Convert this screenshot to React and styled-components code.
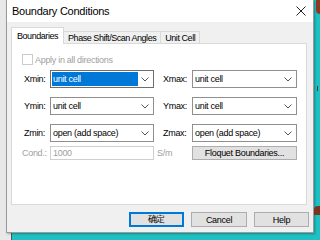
import React from 'react'
import styled, { createGlobalStyle } from 'styled-components'

const Global = createGlobalStyle`
  body {
    margin: 0;
    width: 320px;
    height: 240px;
    overflow: hidden;
    font-family: "Liberation Sans", Arial, sans-serif;
  }
`

const Scene = styled.div`
  width: 320px;
  height: 240px;
  display: flex;
  background: linear-gradient(to right, #e8e8e8 0 11px, #4a5a5a 11px 12px, #1dc1c3 12px);
`

const Dialog = styled.div`
  margin-left: 6px;
  width: 308px;
  height: 233px;
  box-sizing: border-box;
  border: 1px solid #9a9a9a;
  border-top: none;
  background: #f0f0f0;
  display: flex;
  flex-direction: column;
  box-shadow: 1px 1px 2px rgba(0, 0, 0, 0.3);
`

const TitleBar = styled.div`
  height: 22px;
  flex: none;
  background: #fff;
  display: flex;
  align-items: center;
  padding-left: 5px;
  font-size: 11px;
  letter-spacing: -0.25px;
  color: #000;
`

const Close = styled.div`
  margin-left: auto;
  margin-right: 7px;
  width: 10px;
  height: 10px;
  display: flex;
`

const Body = styled.div`
  flex: 1;
  display: flex;
  flex-direction: column;
  padding: 6px 6px 0 4px;
`

const Tabs = styled.div`
  display: flex;
  align-items: flex-end;
  height: 16px;
  position: relative;
  z-index: 1;
  margin-bottom: -1px;
`

const Tab = styled.div`
  box-sizing: border-box;
  height: ${p => (p.$active ? 17 : 13)}px;
  padding: 0 ${p => (p.$active ? 5 : 4)}px;
  display: flex;
  align-items: center;
  font-size: 9px;
  letter-spacing: -0.45px;
  color: #000;
  background: ${p => (p.$active ? '#fff' : '#f0f0f0')};
  border: 1px solid #d9d9d9;
  border-bottom: ${p => (p.$active ? 'none' : '1px solid #d9d9d9')};
  margin-left: ${p => (p.$active ? 0 : -1)}px;
  padding-bottom: ${p => (p.$active ? 1 : 0)}px;
`

const Panel = styled.div`
  height: 162px;
  box-sizing: border-box;
  background: #fff;
  border: 1px solid #d9d9d9;
  padding: 10px 0 0 12px;
  display: flex;
  flex-direction: column;
  font-size: 9px;
  letter-spacing: -0.3px;
`

const CheckRow = styled.div`
  display: flex;
  align-items: center;
  gap: 2px;
  margin-left: -2px;
  height: 11px;
  color: #a0a0a0;
`

const Box = styled.div`
  width: 9px;
  height: 9px;
  border: 1px solid #cccccc;
  background: #fff;
`

const Row = styled.div`
  display: grid;
  grid-template-columns: 26px 104px 38px 105px;
  height: ${p => p.$h}px;
  margin-top: ${p => p.$top}px;
  align-items: center;
`

const Label = styled.div`
  color: ${p => (p.$disabled ? '#a0a0a0' : '#000')};
  padding-left: ${p => p.$pad || 0}px;
  margin-left: ${p => p.$shift || 0}px;
`

const Select = styled.div`
  box-sizing: border-box;
  height: 18px;
  border: 1px solid ${p => (p.$focus ? '#6e6e6e' : '#8f8f8f')};
  background: #fff;
  display: flex;
  align-items: center;
  padding: 1px;
`

const Value = styled.div`
  flex: 1;
  height: 14px;
  display: flex;
  align-items: center;
  padding-left: 1px;
  color: ${p => (p.$focus ? '#fff' : '#000')};
  background: ${p => (p.$focus ? '#0078d7' : 'transparent')};
`

const Arrow = styled.div`
  width: 14px;
  display: flex;
  justify-content: center;
`

const Input = styled.div`
  box-sizing: border-box;
  height: 14px;
  border: 1px solid #cfcfcf;
  background: #fff;
  color: #a0a0a0;
  display: flex;
  align-items: center;
  padding-left: 2px;
`

const Button = styled.div`
  box-sizing: border-box;
  height: ${p => p.$h || 15}px;
  width: ${p => (p.$w ? p.$w + 'px' : 'auto')};
  background: #e1e1e1;
  border: 1px solid ${p => (p.$primary ? '#0078d7' : '#adadad')};
  box-shadow: ${p => (p.$primary ? 'inset 0 0 0 1px #0078d7' : 'none')};
  display: flex;
  align-items: center;
  justify-content: center;
  font-size: 9px;
  letter-spacing: -0.3px;
  color: #000;
`

const Footer = styled.div`
  display: flex;
  justify-content: flex-end;
  gap: 7px;
  margin-top: 7px;
  margin-right: -2px;
`

const RightEdge = styled.div`
  flex: 1;
  display: flex;
  flex-direction: column;
`

const Stain = styled.div`
  height: ${p => p.$h}px;
  margin-top: ${p => p.$top}px;
  margin-left: ${p => p.$left}px;
  width: ${p => p.$w}px;
  border-radius: ${p => p.$r || '0'};
  background: ${p => p.$c};
`

const Chevron = () => (
  <svg width="8" height="5" viewBox="0 0 8 5">
    <polyline points="0.5,0.5 4,4 7.5,0.5" fill="none" stroke="#555" strokeWidth="1" />
  </svg>
)

const Field = ({ value, focus }) => (
  <Select $focus={focus}>
    <Value $focus={focus}>{value}</Value>
    <Arrow><Chevron /></Arrow>
  </Select>
)

const rows = [
  ['Xmin:', 'unit cell', 'Xmax:', 'unit cell', true],
  ['Ymin:', 'unit cell', 'Ymax:', 'unit cell'],
  ['Zmin:', 'open (add space)', 'Zmax:', 'open (add space)'],
]

export default function App() {
  return (
    <>
      <Global />
      <Scene>
        <Dialog>
          <TitleBar>
            Boundary Conditions
            <Close>
              <svg width="10" height="10" viewBox="0 0 10 10">
                <path d="M0.5 0.5 L9.5 9.5 M9.5 0.5 L0.5 9.5" stroke="#222" strokeWidth="1" />
              </svg>
            </Close>
          </TitleBar>
          <Body>
            <Tabs>
              <Tab $active>Boundaries</Tab>
              <Tab>Phase Shift/Scan Angles</Tab>
              <Tab>Unit Cell</Tab>
            </Tabs>
            <Panel>
              <CheckRow>
                <Box />
                Apply in all directions
              </CheckRow>
              {rows.map(([l1, v1, l2, v2, focus], i) => (
                <Row key={l1} $h={18} $top={i === 0 ? 5 : 9}>
                  <Label>{l1}</Label>
                  <Field value={v1} focus={focus} />
                  <Label $pad={9}>{l2}</Label>
                  <Field value={v2} />
                </Row>
              ))}
              <Row $h={14} $top={4}>
                <Label $disabled $shift={-2}>Cond.:</Label>
                <Input>1000</Input>
                <Label $disabled $pad={3}>S/m</Label>
                <Button $h={14}>Floquet Boundaries...</Button>
              </Row>
            </Panel>
            <Footer>
              <Button $w={55} $primary>确定</Button>
              <Button $w={56}>Cancel</Button>
              <Button $w={55}>Help</Button>
            </Footer>
          </Body>
        </Dialog>
        <RightEdge>
          <Stain $h={14} $top={0} $left={2} $w={4} $r="0 0 0 4px" $c="#8e3a22" />
          <Stain $h={5} $top={72} $left={3} $w={1} $c="#2b3a38" />
          <Stain $h={9} $top={115} $left={0} $w={6} $r="4px 0 0 0" $c="#7a3420" />
        </RightEdge>
      </Scene>
    </>
  )
}
